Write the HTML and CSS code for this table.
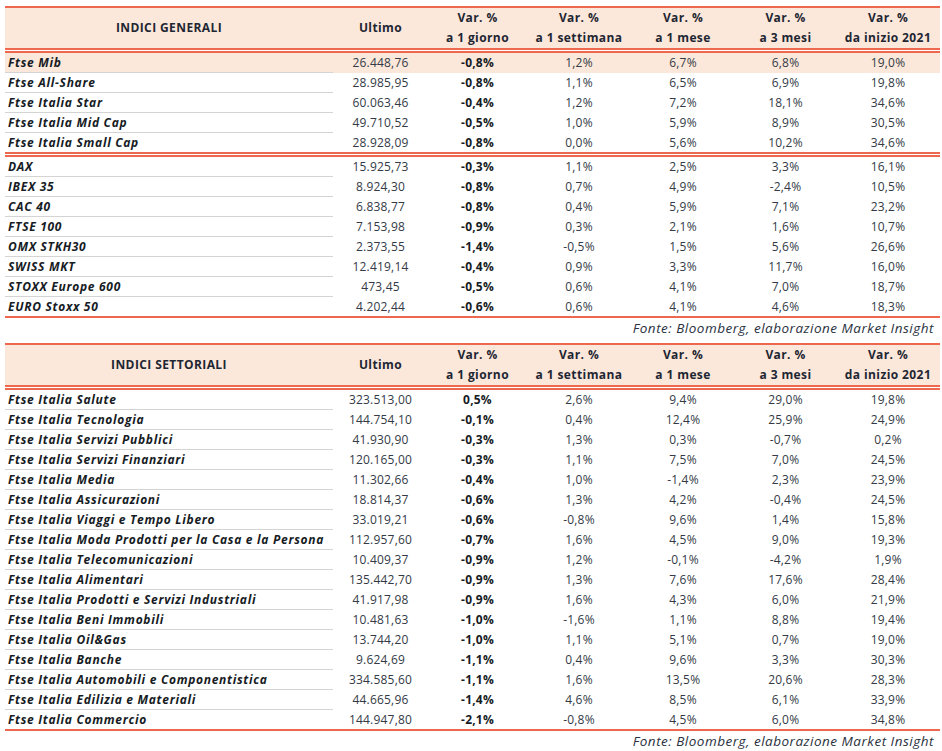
FILE: index.html
```html
<!DOCTYPE html>
<html lang="it">
<head>
<meta charset="utf-8">
<title>Indici</title>
<link rel="stylesheet" href="styles.css">
</head>
<body>
<div class="sheet">
  <section class="tbl">
    <div class="row head">
      <div class="c title">INDICI GENERALI</div>
      <div class="c">Ultimo</div>
      <div class="c two"><span>Var. %</span><span>a 1 giorno</span></div>
      <div class="c two"><span>Var. %</span><span>a 1 settimana</span></div>
      <div class="c two"><span>Var. %</span><span>a 1 mese</span></div>
      <div class="c two"><span>Var. %</span><span>a 3 mesi</span></div>
      <div class="c two"><span>Var. %</span><span>da inizio 2021</span></div>
    </div>
    <div class="dbl"></div>
    <div class="group">
      <div class="row hl"><div class="n">Ftse Mib</div><div>26.448,76</div><div class="b">-0,8%</div><div>1,2%</div><div>6,7%</div><div>6,8%</div><div>19,0%</div></div>
      <div class="row"><div class="n">Ftse All-Share</div><div>28.985,95</div><div class="b">-0,8%</div><div>1,1%</div><div>6,5%</div><div>6,9%</div><div>19,8%</div></div>
      <div class="row"><div class="n">Ftse Italia Star</div><div>60.063,46</div><div class="b">-0,4%</div><div>1,2%</div><div>7,2%</div><div>18,1%</div><div>34,6%</div></div>
      <div class="row"><div class="n">Ftse Italia Mid Cap</div><div>49.710,52</div><div class="b">-0,5%</div><div>1,0%</div><div>5,9%</div><div>8,9%</div><div>30,5%</div></div>
      <div class="row"><div class="n">Ftse Italia Small Cap</div><div>28.928,09</div><div class="b">-0,8%</div><div>0,0%</div><div>5,6%</div><div>10,2%</div><div>34,6%</div></div>
    </div>
    <div class="dbl"></div>
    <div class="group">
      <div class="row"><div class="n">DAX</div><div>15.925,73</div><div class="b">-0,3%</div><div>1,1%</div><div>2,5%</div><div>3,3%</div><div>16,1%</div></div>
      <div class="row"><div class="n">IBEX 35</div><div>8.924,30</div><div class="b">-0,8%</div><div>0,7%</div><div>4,9%</div><div>-2,4%</div><div>10,5%</div></div>
      <div class="row"><div class="n">CAC 40</div><div>6.838,77</div><div class="b">-0,8%</div><div>0,4%</div><div>5,9%</div><div>7,1%</div><div>23,2%</div></div>
      <div class="row"><div class="n">FTSE 100</div><div>7.153,98</div><div class="b">-0,9%</div><div>0,3%</div><div>2,1%</div><div>1,6%</div><div>10,7%</div></div>
      <div class="row"><div class="n">OMX STKH30</div><div>2.373,55</div><div class="b">-1,4%</div><div>-0,5%</div><div>1,5%</div><div>5,6%</div><div>26,6%</div></div>
      <div class="row"><div class="n">SWISS MKT</div><div>12.419,14</div><div class="b">-0,4%</div><div>0,9%</div><div>3,3%</div><div>11,7%</div><div>16,0%</div></div>
      <div class="row"><div class="n">STOXX Europe 600</div><div>473,45</div><div class="b">-0,5%</div><div>0,6%</div><div>4,1%</div><div>7,0%</div><div>18,7%</div></div>
      <div class="row"><div class="n">EURO Stoxx 50</div><div>4.202,44</div><div class="b">-0,6%</div><div>0,6%</div><div>4,1%</div><div>4,6%</div><div>18,3%</div></div>
    </div>
    <div class="end"></div>
    <p class="source">Fonte: Bloomberg, elaborazione Market Insight</p>
  </section>

  <section class="tbl">
    <div class="row head">
      <div class="c title">INDICI SETTORIALI</div>
      <div class="c">Ultimo</div>
      <div class="c two"><span>Var. %</span><span>a 1 giorno</span></div>
      <div class="c two"><span>Var. %</span><span>a 1 settimana</span></div>
      <div class="c two"><span>Var. %</span><span>a 1 mese</span></div>
      <div class="c two"><span>Var. %</span><span>a 3 mesi</span></div>
      <div class="c two"><span>Var. %</span><span>da inizio 2021</span></div>
    </div>
    <div class="dbl"></div>
    <div class="group">
      <div class="row"><div class="n">Ftse Italia Salute</div><div>323.513,00</div><div class="b">0,5%</div><div>2,6%</div><div>9,4%</div><div>29,0%</div><div>19,8%</div></div>
      <div class="row"><div class="n">Ftse Italia Tecnologia</div><div>144.754,10</div><div class="b">-0,1%</div><div>0,4%</div><div>12,4%</div><div>25,9%</div><div>24,9%</div></div>
      <div class="row"><div class="n">Ftse Italia Servizi Pubblici</div><div>41.930,90</div><div class="b">-0,3%</div><div>1,3%</div><div>0,3%</div><div>-0,7%</div><div>0,2%</div></div>
      <div class="row"><div class="n">Ftse Italia Servizi Finanziari</div><div>120.165,00</div><div class="b">-0,3%</div><div>1,1%</div><div>7,5%</div><div>7,0%</div><div>24,5%</div></div>
      <div class="row"><div class="n">Ftse Italia Media</div><div>11.302,66</div><div class="b">-0,4%</div><div>1,0%</div><div>-1,4%</div><div>2,3%</div><div>23,9%</div></div>
      <div class="row"><div class="n">Ftse Italia Assicurazioni</div><div>18.814,37</div><div class="b">-0,6%</div><div>1,3%</div><div>4,2%</div><div>-0,4%</div><div>24,5%</div></div>
      <div class="row"><div class="n">Ftse Italia Viaggi e Tempo Libero</div><div>33.019,21</div><div class="b">-0,6%</div><div>-0,8%</div><div>9,6%</div><div>1,4%</div><div>15,8%</div></div>
      <div class="row"><div class="n">Ftse Italia Moda Prodotti per la Casa e la Persona</div><div>112.957,60</div><div class="b">-0,7%</div><div>1,6%</div><div>4,5%</div><div>9,0%</div><div>19,3%</div></div>
      <div class="row"><div class="n">Ftse Italia Telecomunicazioni</div><div>10.409,37</div><div class="b">-0,9%</div><div>1,2%</div><div>-0,1%</div><div>-4,2%</div><div>1,9%</div></div>
      <div class="row"><div class="n">Ftse Italia Alimentari</div><div>135.442,70</div><div class="b">-0,9%</div><div>1,3%</div><div>7,6%</div><div>17,6%</div><div>28,4%</div></div>
      <div class="row"><div class="n">Ftse Italia Prodotti e Servizi Industriali</div><div>41.917,98</div><div class="b">-0,9%</div><div>1,6%</div><div>4,3%</div><div>6,0%</div><div>21,9%</div></div>
      <div class="row"><div class="n">Ftse Italia Beni Immobili</div><div>10.481,63</div><div class="b">-1,0%</div><div>-1,6%</div><div>1,1%</div><div>8,8%</div><div>19,4%</div></div>
      <div class="row"><div class="n">Ftse Italia Oil&amp;Gas</div><div>13.744,20</div><div class="b">-1,0%</div><div>1,1%</div><div>5,1%</div><div>0,7%</div><div>19,0%</div></div>
      <div class="row"><div class="n">Ftse Italia Banche</div><div>9.624,69</div><div class="b">-1,1%</div><div>0,4%</div><div>9,6%</div><div>3,3%</div><div>30,3%</div></div>
      <div class="row"><div class="n">Ftse Italia Automobili e Componentistica</div><div>334.585,60</div><div class="b">-1,1%</div><div>1,6%</div><div>13,5%</div><div>20,6%</div><div>28,3%</div></div>
      <div class="row"><div class="n">Ftse Italia Edilizia e Materiali</div><div>44.665,96</div><div class="b">-1,4%</div><div>4,6%</div><div>8,5%</div><div>6,1%</div><div>33,9%</div></div>
      <div class="row"><div class="n">Ftse Italia Commercio</div><div>144.947,80</div><div class="b">-2,1%</div><div>-0,8%</div><div>4,5%</div><div>6,0%</div><div>34,8%</div></div>
    </div>
    <div class="end"></div>
    <p class="source">Fonte: Bloomberg, elaborazione Market Insight</p>
  </section>
</div>
</body>
</html>
```

FILE: styles.css
```css
* { box-sizing: border-box; }

html, body {
  margin: 0;
  padding: 0;
  background: #ffffff;
}

body {
  font-family: "Open Sans", "DejaVu Sans", sans-serif;
  font-size: 12px;
  color: #333a46;
}

.sheet {
  width: 942px;
  padding: 6px 2px 0 5px;
}

.tbl {
  width: 935px;
  border-top: 2px solid #ee6850;
}

.row {
  display: grid;
  grid-template-columns: 328px 95px 99px 104px 104px 101px 104px;
  height: 20px;
}

.row > div {
  text-align: center;
  line-height: 19px;
  white-space: nowrap;
  letter-spacing: 0.2px;
}

.row > .n {
  text-align: left;
  padding-left: 3px;
  font-weight: 700;
  font-style: italic;
  letter-spacing: 0.7px;
  color: #161b24;
  border-bottom: 1px solid #d4d4d4;
}

.row > .b {
  font-weight: 700;
  color: #161b24;
}

.group > .row:last-child {
  height: 19px;
}

.group > .row:last-child > .n {
  border-bottom: none;
}

.hl {
  background: #fce8da;
}

.head {
  height: 40px;
  background: #fce8da;
}

.head > .c {
  display: flex;
  flex-direction: column;
  justify-content: center;
  align-items: center;
  font-weight: 700;
  color: #1e2633;
  line-height: 20px;
  letter-spacing: 0.4px;
}

.dbl {
  height: 5px;
  border-top: 2px solid #ee6850;
  border-bottom: 2px solid #ee6850;
}

.end {
  height: 2px;
  background: #ee6850;
}

.source {
  margin: 0;
  height: 25px;
  padding: 1px 6px 0 0;
  text-align: right;
  font-style: italic;
  font-size: 13.5px;
  line-height: 19px;
  letter-spacing: 0.5px;
  color: #2a3140;
}
```
